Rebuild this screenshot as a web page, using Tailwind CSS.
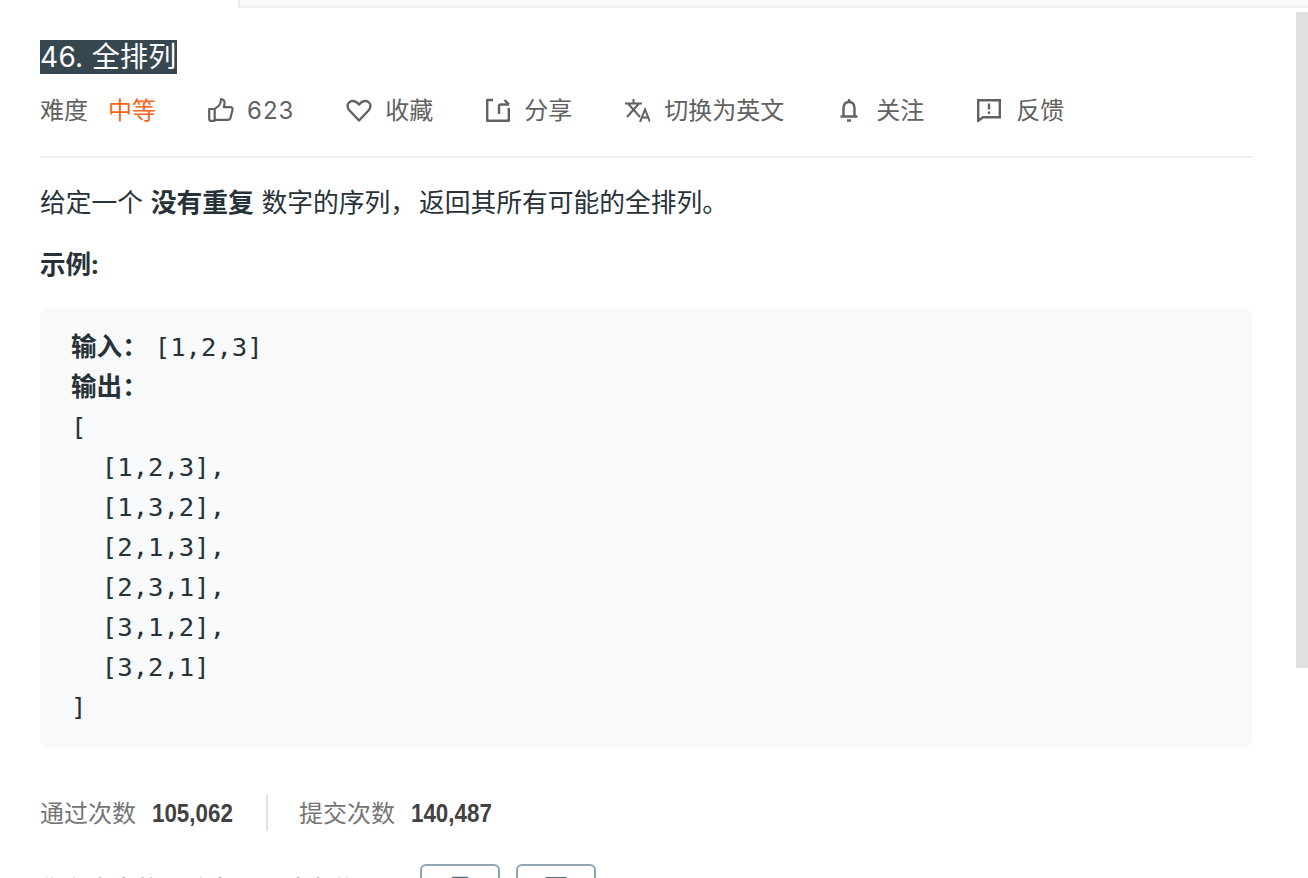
<!DOCTYPE html>
<html lang="zh">
<head>
<meta charset="utf-8">
<script src="https://cdn.jsdelivr.net/npm/@tailwindcss/browser@4"></script>
</head>
<body class="relative h-[878px] w-[1308px] overflow-hidden bg-white font-['Noto_Sans','Noto_Sans_CJK_SC',sans-serif] text-[24px] text-[#263238]">
  <div class="absolute left-[238px] right-0 top-0 h-[8px] border-b-2 border-l-2 border-[#eeeeee] bg-[#f9f9f9]"></div>
  <div class="absolute right-0 top-[12px] h-[656px] w-[12px] bg-[#e0e0e0]"></div>

  <main class="ml-[40px] w-[1212px] pt-[39px]">
    <h1 class="h-[34px] text-[28px] leading-[34px]"><span class="inline-block h-[34px] bg-[#37474f] font-['Inter','Noto_Sans_CJK_SC',sans-serif] font-normal tracking-[0.3px] text-white">46. 全排列</span></h1>

    <div class="mt-[19px] flex h-[36px] items-center text-[24px] leading-[36px] text-[#616161]">
      <span>难度</span>
      <span class="ml-[20px] text-[#f4661c]">中等</span>
      <span class="ml-[52px] flex items-center">
        <svg class="h-[24px] w-[26px]" viewBox="0 0 26 24" fill="none" stroke="#616161" stroke-width="2.200" stroke-linejoin="round"><path d="M1.200 11h5.500v11.800H3a1.800 1.800 0 0 1-1.800-1.800z"/><path d="M6.700 11 11 7.500c1-1 2-3.500 2-6.300 2.500 0 4 2 3.500 4.500l-.7 3.500h6.700c1.500 0 2.300 1 2 2.500l-2 8c-.3 1.200-1 2.100-2.500 2.100H6.700"/></svg>
        <span class="ml-[13px] pt-[1px] font-['Inter','Noto_Sans',sans-serif] tracking-[1px]">623</span>
      </span>
      <span class="ml-[52px] flex items-center">
        <svg class="h-[26px] w-[26px]" viewBox="0 0 26 26" fill="none" stroke="#616161" stroke-width="2.400" stroke-linejoin="round"><path d="M13 23.500 3.500 13.500C1 11 1 7.500 3 5.500 5.300 3.200 9.500 3.200 13 7.500c3.500-4.300 7.700-4.300 10-2 2 2 2 5.500-.5 8z"/></svg>
        <span class="ml-[13px]">收藏</span>
      </span>
      <span class="ml-[53px] flex items-center">
        <svg class="h-[24px] w-[24px]" viewBox="0 0 24 24" fill="none" stroke="#616161" stroke-width="2.400" stroke-linejoin="round"><path d="M7 2H1.200v20.800h21.600V10"/><path d="M13 16V8.500a2 2 0 0 1 2-2h8"/><path d="M18.500 2l4.500 4.500"/></svg>
        <span class="ml-[14px]">分享</span>
      </span>
      <span class="ml-[53px] flex items-center">
        <svg class="h-[24px] w-[25px]" viewBox="0 0 25 24" fill="none" stroke="#616161" stroke-width="2"><path d="M0 5.500h17M8.500 1v4.500M3 5.500 15 19M14 5.500 2 19"/><path d="M15 24l5-12.500L25 24M17 19.500h6"/></svg>
        <span class="ml-[14px]">切换为英文</span>
      </span>
      <span class="ml-[56px] flex items-center">
        <svg class="h-[24px] w-[18px]" viewBox="0 0 18 24" fill="none" stroke="#616161" stroke-width="2.400" stroke-linejoin="round"><path d="M.5 18.500h17M3.500 18.500V10.500c0-4 2-6.500 5.500-6.500s5.500 2.500 5.500 6.500v8"/><path d="M9 1v3M7 22.500h4"/></svg>
        <span class="ml-[18px]">关注</span>
      </span>
      <span class="ml-[53px] flex items-center">
        <svg class="h-[24px] w-[24px]" viewBox="0 0 24 24" fill="none" stroke="#616161" stroke-width="2.400"><path d="M1.200 2.200h21.600v17H6l-4.800 3.600z"/><path d="M12 5.500v6M12 13.500v2.500"/></svg>
        <span class="ml-[15px]">反馈</span>
      </span>
    </div>

    <div class="mt-[28px] border-t-2 border-[#eeeeee] pt-[26px] text-[25.75px] leading-[36px] [word-spacing:1px]">给定一个 <strong class="font-bold">没有重复</strong> 数字的序列<span class="tracking-[3px]">，</span>返回其所有可能的全排列。</div>
    <div class="mt-[27px] text-[25.6px] font-bold leading-[36px]">示例:</div>

    <pre class="mt-[25px] h-[440px] rounded-[8px] bg-[#f7f9fa] pl-[31px] pt-[19px] font-['DejaVu_Sans_Mono','Noto_Sans_CJK_SC',monospace] text-[25.6px] leading-[40px]"><strong class="font-['Noto_Sans_CJK_SC',sans-serif] font-bold leading-none">输入：</strong><span class="ml-[7px]">[1,2,3]</span>
<strong class="font-['Noto_Sans_CJK_SC',sans-serif] font-bold leading-none">输出：</strong>
[
  [1,2,3],
  [1,3,2],
  [2,1,3],
  [2,3,1],
  [3,1,2],
  [3,2,1]
]</pre>

    <div class="mt-[47px] flex h-[36px] items-center leading-[36px] text-[#757575]">
      <span>通过次数</span>
      <span class="ml-[16px] w-[81px] origin-left scale-x-[0.86] whitespace-nowrap font-['Liberation_Sans',sans-serif] text-[26px] font-bold text-[#424242]">105,062</span>
      <span class="ml-[33px] h-[36px] w-[2px] bg-[#e0e0e0]"></span>
      <span class="ml-[31px]">提交次数</span>
      <span class="ml-[16px] w-[82px] origin-left scale-x-[0.86] whitespace-nowrap font-['Liberation_Sans',sans-serif] text-[26px] font-bold text-[#424242]">140,487</span>
    </div>

    <div class="mt-[33px] flex items-start text-[#424242]">
      <span class="w-[380px] pt-[7px] leading-[36px]">你在真实的面试中遇到过这道题？</span>
      <span class="flex h-[40px] w-[80px] items-center justify-center rounded-[6px] border-2 border-[#90a4ae] pt-[5px] text-[#546e7a]">是</span>
      <span class="ml-[16px] flex h-[40px] w-[80px] items-center justify-center rounded-[6px] border-2 border-[#90a4ae] pt-[5px] text-[#546e7a]">否</span>
    </div>
  </main>
</body>
</html>
